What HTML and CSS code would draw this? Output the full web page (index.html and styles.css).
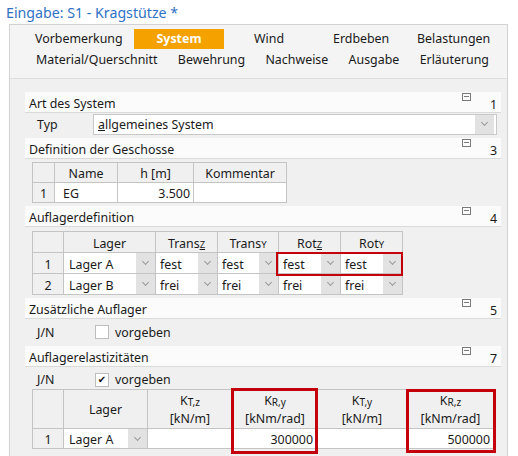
FILE: index.html
```html
<!DOCTYPE html>
<html lang="de">
<head>
  <meta charset="UTF-8">
  <meta name="viewport" content="width=device-width, initial-scale=1.0">
  <title>Eingabe: S1 - Kragstütze</title>
  <link rel="stylesheet" href="styles.css">
</head>
<body>
  <h1 class="title">Eingabe: S1 - Kragstütze *</h1>

  <div class="panel">
    <!-- Registerkarten -->
    <div class="tabs">
      <div class="tab-row first">
        <span class="tab">Vorbemerkung</span>
        <span class="tab active">System</span>
        <span class="tab wind">Wind</span>
        <span class="tab">Erdbeben</span>
        <span class="tab">Belastungen</span>
      </div>
      <div class="tab-row second">
        <span class="tab">Material/Querschnitt</span>
        <span class="tab">Bewehrung</span>
        <span class="tab">Nachweise</span>
        <span class="tab">Ausgabe</span>
        <span class="tab">Erläuterung</span>
      </div>
    </div>

    <div class="content">
      <!-- 1 -->
      <div class="group">
        <div class="group-head"><span class="caption">Art des System</span><i class="toggle"></i><span class="num">1</span></div>
        <div class="field">
          <span class="label">Typ</span>
          <div class="select"><span class="val"><u>a</u>llgemeines System</span><i class="dd"></i></div>
        </div>
      </div>

      <!-- 3 -->
      <div class="group">
        <div class="group-head"><span class="caption">Definition der Geschosse</span><i class="toggle"></i><span class="num">3</span></div>
        <div class="grid-wrap">
          <table class="grid geschosse">
            <tr class="head">
              <th></th><th>Name</th><th>h [m]</th><th>Kommentar</th>
            </tr>
            <tr>
              <td class="no">1</td><td class="txt">EG</td><td class="nr">3.500</td><td></td>
            </tr>
          </table>
        </div>
      </div>

      <!-- 4 -->
      <div class="group">
        <div class="group-head"><span class="caption">Auflagerdefinition</span><i class="toggle"></i><span class="num">4</span></div>
        <div class="grid-wrap">
          <table class="grid lager">
            <tr class="head">
              <th></th>
              <th>Lager</th>
              <th>Trans<span class="ix u">Z</span></th>
              <th>Trans<span class="ix">Y</span></th>
              <th>Rot<span class="ix u">Z</span></th>
              <th>Rot<span class="ix">Y</span></th>
            </tr>
            <tr>
              <td class="no">1</td>
              <td class="combo"><div class="cb"><span>Lager A</span><i class="dd"></i></div></td>
              <td class="combo"><div class="cb"><span>fest</span><i class="dd"></i></div></td>
              <td class="combo"><div class="cb"><span>fest</span><i class="dd"></i></div></td>
              <td class="combo"><div class="cb"><span>fest</span><i class="dd"></i></div></td>
              <td class="combo"><div class="cb"><span>fest</span><i class="dd"></i></div></td>
            </tr>
            <tr>
              <td class="no">2</td>
              <td class="combo"><div class="cb"><span>Lager B</span><i class="dd"></i></div></td>
              <td class="combo"><div class="cb"><span>frei</span><i class="dd"></i></div></td>
              <td class="combo"><div class="cb"><span>frei</span><i class="dd"></i></div></td>
              <td class="combo"><div class="cb"><span>frei</span><i class="dd"></i></div></td>
              <td class="combo"><div class="cb"><span>frei</span><i class="dd"></i></div></td>
            </tr>
          </table>
          <div class="mark mark-rot"></div>
        </div>
      </div>

      <!-- 5 -->
      <div class="group">
        <div class="group-head"><span class="caption">Zusätzliche Auflager</span><i class="toggle"></i><span class="num">5</span></div>
        <div class="field check-row">
          <span class="label">J/N</span>
          <span class="box"></span><span class="chk-text">vorgeben</span>
        </div>
      </div>

      <!-- 7 -->
      <div class="group">
        <div class="group-head"><span class="caption">Auflagerelastizitäten</span><i class="toggle"></i><span class="num">7</span></div>
        <div class="field check-row last">
          <span class="label">J/N</span>
          <span class="box on">✔</span><span class="chk-text">vorgeben</span>
        </div>
        <div class="grid-wrap">
          <table class="grid elast">
            <tr class="head">
              <th></th>
              <th>Lager</th>
              <th>K<span class="sb">T,z</span><br>[kN/m]</th>
              <th>K<span class="sb">R,y</span><br>[kNm/rad]</th>
              <th>K<span class="sb">T,y</span><br>[kN/m]</th>
              <th>K<span class="sb">R,z</span><br>[kNm/rad]</th>
            </tr>
            <tr>
              <td class="no">1</td>
              <td class="combo"><div class="cb"><span>Lager A</span><i class="dd"></i></div></td>
              <td></td>
              <td class="nr">300000</td>
              <td></td>
              <td class="nr">500000</td>
            </tr>
          </table>
          <div class="mark mark-ry"></div>
          <div class="mark mark-rz"></div>
        </div>
      </div>
    </div>
  </div>
</body>
</html>
```

FILE: styles.css
```css
body {
  margin: 0;
  font-family: "Noto Sans", "Open Sans", sans-serif;
  font-size: 12.4px;
  color: #1a1a1a;
  background: #fff;
}

.title {
  margin: 0;
  padding: 2px 0 0 6px;
  height: 24px;
  box-sizing: border-box;
  font-size: 14.2px;
  font-weight: normal;
  line-height: 22px;
  color: #2f72c4;
}

.panel {
  margin-left: 9px;
  width: 499px;
  height: 460px;
  box-sizing: border-box;
  border: 1px solid #d2d2d2;
  background: #f0f0f0;
}

/* Registerkarten */
.tabs {
  height: 54px;
  box-sizing: border-box;
  padding-top: 4px;
  background: #f4f4f4;
  border-bottom: 1px solid #dedede;
}

.tab-row {
  height: 20px;
  line-height: 20px;
  margin-bottom: 1px;
}

.tab-row.first {
  display: grid;
  grid-template-columns: 99px 90px 109px 84px auto;
  padding-left: 25px;
}

.tab-row.second {
  display: flex;
  justify-content: space-between;
  padding: 0 18px 0 26px;
}

.tab.wind {
  padding-left: 30px;
}

.tab.active {
  background: #f5a100;
  color: #fff;
  font-weight: bold;
  text-align: center;
}

/* Bereiche */
.content {
  padding: 13px 6px 0 15px;
}

.group + .group {
  margin-top: 3px;
}

.group-head {
  display: flex;
  height: 21px;
  box-sizing: border-box;
  padding: 0 4px 0 4px;
  background: #fbfbfb;
  border-bottom: 1px solid #dadada;
}

.group-head .caption {
  flex: 1;
  line-height: 21px;
  padding-top: 1px;
}

.toggle {
  width: 9px;
  height: 8px;
  margin-top: 1px;
  box-sizing: border-box;
  border: 1px solid #7a7a7a;
  position: relative;
}

.toggle::after {
  content: "";
  position: absolute;
  left: 1px;
  right: 1px;
  top: 2px;
  height: 1px;
  background: #7a7a7a;
}

.group-head .num {
  width: 26px;
  text-align: right;
  line-height: 22px;
  padding-top: 2px;
  box-sizing: border-box;
}

.field {
  display: flex;
  align-items: center;
  height: 22px;
  margin-bottom: 1px;
}

.field .label {
  width: 68px;
  padding-left: 12px;
  box-sizing: border-box;
}

.select {
  display: flex;
  width: 404px;
  height: 21px;
  box-sizing: border-box;
  border: 1px solid #c8c8c8;
  background: #fff;
}

.select .val {
  flex: 1;
  padding-left: 4px;
  line-height: 19px;
}

.select .dd {
  margin: 0 2px 0 0;
}

/* Aufklapp-Knopf */
.dd {
  width: 19px;
  background: #e2e2e2;
  display: flex;
  align-items: center;
  justify-content: center;
}

.dd::after {
  content: "";
  width: 4px;
  height: 4px;
  margin-top: -3px;
  border-right: 1px solid #9a9a9a;
  border-bottom: 1px solid #9a9a9a;
  transform: rotate(45deg);
}

/* Tabellen */
.grid-wrap {
  position: relative;
  width: fit-content;
  margin-left: 7px;
}

.grid {
  border-collapse: separate;
  border-spacing: 0;
  table-layout: fixed;
  border-left: 1px solid #c4c4c4;
  border-top: 1px solid #c4c4c4;
}

.grid th,
.grid td {
  box-sizing: border-box;
  padding: 2px 0 0;
  border-right: 1px solid #c4c4c4;
  border-bottom: 1px solid #c4c4c4;
  height: 21px;
  background: #fff;
  font-weight: normal;
  white-space: nowrap;
}

.grid td.combo {
  padding: 0;
}

.grid th {
  background: #f0f0f0;
  text-align: center;
}

.grid td.no {
  background: #f0f0f0;
  text-align: center;
}

.grid td.txt {
  padding-left: 8px;
}

.grid td.nr {
  text-align: right;
  padding-right: 3px;
}

.geschosse {
  margin-top: 3px;
  width: 255px;
}

.geschosse th,
.geschosse td {
  height: 20px;
}

.geschosse th:nth-child(1) { width: 22px; }
.geschosse th:nth-child(2) { width: 63px; }
.geschosse th:nth-child(3) { width: 76px; }
.geschosse th:nth-child(4) { width: 93px; }

.lager {
  margin-top: 4px;
  margin-bottom: 1px;
  width: 371px;
}

.lager th:nth-child(1) { width: 31px; }
.lager th:nth-child(2) { width: 92px; }
.lager th:nth-child(3) { width: 62px; }
.lager th:nth-child(4) { width: 61px; }
.lager th:nth-child(5) { width: 62px; }
.lager th:nth-child(6) { width: 62px; }

.elast {
  width: 463px;
}

.elast th {
  height: 39px;
  padding-top: 1px;
  line-height: 17px;
}

.elast td {
  height: 20px;
}

.elast td.nr {
  padding-right: 4px;
}

.elast th:nth-child(1) { width: 31px; }
.elast th:nth-child(2) { width: 84px; }
.elast th:nth-child(3) { width: 85px; }
.elast th:nth-child(4) { width: 85px; }
.elast th:nth-child(5) { width: 89px; }
.elast th:nth-child(6) { width: 88px; }

.ix {
  font-size: 9.5px;
}

.ix.u {
  text-decoration: underline;
}

.sb {
  font-size: 10px;
  position: relative;
  top: 1px;
}

.combo .cb {
  display: flex;
  height: 20px;
}

.elast .combo .cb {
  height: 19px;
}

.cb span {
  flex: 1;
  padding: 3px 0 0 4px;
  line-height: 17px;
  overflow: hidden;
}

.lager td.combo:nth-child(2) .cb span,
.elast td.combo .cb span {
  padding-left: 5px;
}

.elast .cb span {
  padding-top: 2px;
}

/* Kontrollkästchen */
.check-row {
  height: 24px;
  padding-top: 2px;
  box-sizing: border-box;
  margin-bottom: 0;
}

.check-row.last {
  height: 22px;
  padding-top: 3px;
}

.check-row .label {
  width: 68px;
}

.box {
  width: 14px;
  height: 14px;
  box-sizing: border-box;
  margin-left: 2px;
  border: 1px solid #bdbdbd;
  background: #fff;
  font-family: "DejaVu Sans", sans-serif;
  font-size: 10px;
  line-height: 12px;
  text-align: center;
  color: #111;
}

.chk-text {
  margin-left: 6px;
}

/* rote Markierungen (Tabellenabstand klappt mit dem Wrapper zusammen) */
.mark {
  position: absolute;
  border: 2px solid #c4000c;
  box-sizing: border-box;
  pointer-events: none;
}

.mark-rot {
  left: 244px;
  top: 21px;
  width: 127px;
  height: 24px;
}

.mark-ry {
  left: 199px;
  top: -1px;
  width: 87px;
  height: 66px;
  border-width: 3px;
}

.mark-rz {
  left: 374px;
  top: 0;
  width: 90px;
  height: 64px;
  border-width: 3px;
}
```
